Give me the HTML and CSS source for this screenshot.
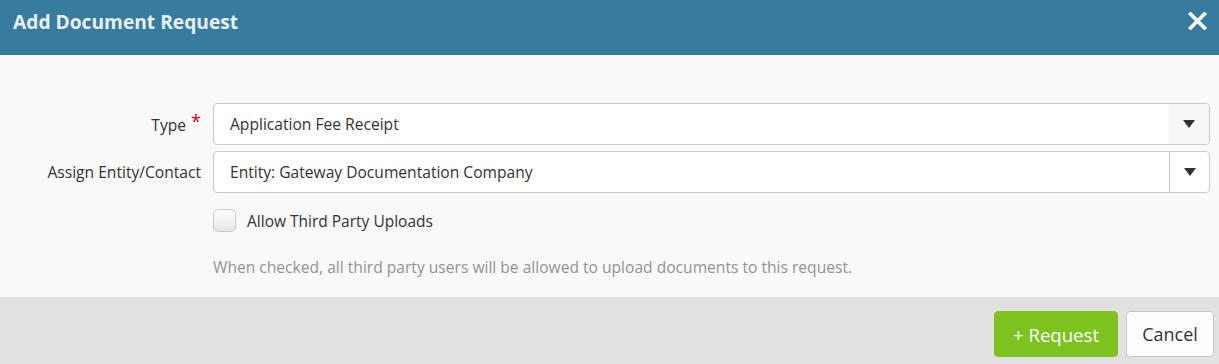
FILE: index.html
```html
<!DOCTYPE html>
<html lang="en">
<head>
<meta charset="utf-8">
<title>Add Document Request</title>
<link rel="stylesheet" href="styles.css">
</head>
<body>
<div class="modal">
  <div class="modal-header">
    <h1 class="modal-title">Add Document Request</h1>
    <button class="close-btn" aria-label="Close">
      <svg width="19" height="18" viewBox="0 0 19 18"><path d="M2.5 2 L16.5 16 M16.5 2 L2.5 16" stroke="#fff" stroke-width="3.6" stroke-linecap="square"/></svg>
    </button>
  </div>
  <div class="modal-body">
    <div class="form">
      <label class="form-label">Type <span class="required">*</span></label>
      <div class="select select-active">
        <span class="select-value">Application Fee Receipt</span>
        <span class="select-arrow"><span class="caret"></span></span>
      </div>
      <label class="form-label">Assign Entity/Contact</label>
      <div class="select">
        <span class="select-value">Entity: Gateway Documentation Company</span>
        <span class="select-arrow divider"><span class="caret"></span></span>
      </div>
      <div></div>
      <label class="check-row">
        <span class="checkbox"></span>
        <span class="check-text">Allow Third Party Uploads</span>
      </label>
      <div></div>
      <p class="help">When checked, all third party users will be allowed to upload documents to this request.</p>
    </div>
  </div>
  <div class="modal-footer">
    <button class="btn btn-primary">+ Request</button>
    <button class="btn btn-default">Cancel</button>
  </div>
</div>
</body>
</html>
```
FILE: styles.css
```css
* { box-sizing: border-box; }
html, body { margin: 0; padding: 0; }
body {
  font-family: "Open Sans", "Liberation Sans", sans-serif;
  background: #f9f9f9;
  color: #333;
  width: 1219px;
  height: 364px;
  overflow: hidden;
}
.modal { display: flex; flex-direction: column; height: 364px; }
.modal-header {
  height: 55px;
  background: #377b9f;
  display: flex;
  align-items: center;
  justify-content: space-between;
  padding: 0 12px 0 13px;
}
.modal-title {
  margin: 0;
  font-size: 19.2px;
  font-weight: 700;
  color: #e9f1f6;
  line-height: 1;
  position: relative;
  top: -6px;
}
.close-btn {
  background: none;
  border: 0;
  padding: 0;
  width: 19px;
  height: 18px;
  position: relative;
  top: -7px;
  display: flex;
}
.modal-body {
  background: #f9f9f9;
  height: 242px;
  padding: 48px 9px 0 0;
}
.form {
  display: grid;
  grid-template-columns: 213px 1fr;
  row-gap: 6px;
  align-items: center;
}
.form-label {
  text-align: right;
  padding-right: 12px;
  font-size: 15.6px;
  color: #333;
  white-space: nowrap;
}
.required {
  color: #d0021b;
  font-size: 18px;
  position: relative;
  top: -3px;
  margin-left: 1px;
}
.select {
  height: 42px;
  border: 1px solid #cccccc;
  border-radius: 4px;
  background: #fff;
  display: flex;
  align-items: center;
}
.select-value {
  flex: 1;
  padding-left: 16px;
  font-size: 15.6px;
  color: #333;
}
.select-arrow {
  width: 40px;
  align-self: stretch;
  display: flex;
  align-items: center;
  justify-content: center;
  border-radius: 0 3px 3px 0;
}
.select-active .select-arrow { background: #f7f7f7; }
.select-arrow.divider { border-left: 1px solid #cccccc; }
.caret {
  width: 0; height: 0;
  border-left: 6px solid transparent;
  border-right: 6px solid transparent;
  border-top: 8px solid #333;
}
.check-row {
  display: flex;
  align-items: center;
  gap: 11px;
  margin-top: 10px;
}
.checkbox {
  width: 23px;
  height: 23px;
  border: 1px solid #c9c9c9;
  border-radius: 5px;
  background: linear-gradient(#ffffff, #e6e6e6);
}
.check-text { font-size: 15.5px; color: #333; }
.help {
  margin: 18px 0 0;
  font-size: 15.6px;
  color: #939393;
}
.modal-footer {
  flex: 1;
  background: #e1e1e1;
  display: flex;
  justify-content: flex-end;
  gap: 8px;
  padding: 14px 5px 0 0;
}
.btn {
  height: 46px;
  border-radius: 4px;
  font-family: "Open Sans", "Liberation Sans", sans-serif;
  font-size: 18px;
  padding: 0;
}
.btn-primary {
  width: 124px;
  background: #7dc21e;
  border: 1px solid #7dc21e;
  color: #fff;
  font-size: 18.6px;
}
.btn-default {
  width: 88px;
  background: #fdfdfd;
  border: 1px solid #c6c6c6;
  color: #333;
}
```
